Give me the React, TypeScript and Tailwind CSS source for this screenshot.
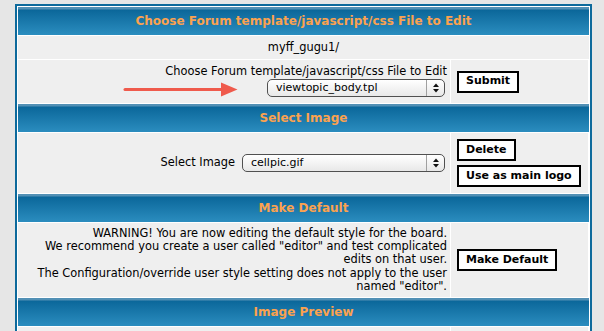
import React from "react";

const Head = ({ title }: { title: string }) => (
  <div className="flex h-[28px] items-center justify-center bg-[linear-gradient(to_bottom,#5290b5_0px,#5290b5_2px,#0b679a_3px,#2b8dbf_100%)] text-[12px] font-bold text-[#fba24f]">
    {title}
  </div>
);

const Btn = ({ label }: { label: string }) => (
  <div className="flex h-[22px] w-fit items-center border-2 border-black bg-white px-[7px] text-[11px] font-bold text-black">
    {label}
  </div>
);

const Sel = ({ value, className }: { value: string; className: string }) => (
  <div
    className={
      "flex h-[18px] items-stretch rounded-[5px] border border-[#505050] bg-[linear-gradient(to_bottom,#ffffff,#e8e8e8)] text-[11px] " +
      className
    }
  >
    <span className="flex-1 pl-[8px] text-left leading-[16px]">{value}</span>
    <span className="flex w-[18px] items-center justify-center border-l border-[#a0a0a0]">
      <svg width="6" height="10" viewBox="0 0 6 10">
        <polygon points="3,0.5 6,4 0,4" fill="#111" />
        <polygon points="0,6 6,6 3,9.5" fill="#111" />
      </svg>
    </span>
  </div>
);

export default function App() {
  return (
    <div className="relative h-[331px] overflow-hidden bg-[#e6e6e6] pt-[4px] font-['DejaVu_Sans',sans-serif] text-[11.4px] text-black">
      <div className="ml-[15px] w-[577px] border-2 border-[#0d6a9c] bg-white p-px">
        <div className="flex flex-col gap-px">
          <Head title="Choose Forum template/javascript/css File to Edit" />

          <div className="flex h-[23px] items-center justify-center bg-[#efefef]">myff_gugu1/</div>

          <div className="grid grid-cols-[432px_137px] gap-px">
            <div className="flex h-[43px] flex-col items-end bg-[#efefef] pr-[3px] pt-[4px]">
              <div className="leading-[14px]">Choose Forum template/javascript/css File to Edit</div>
              <Sel value="viewtopic_body.tpl" className="mr-[2px] mt-px w-[178px]" />
            </div>
            <div className="flex items-center bg-[#efefef] pl-[6px]">
              <Btn label="Submit" />
            </div>
          </div>

          <Head title="Select Image" />

          <div className="grid grid-cols-[432px_137px] gap-px">
            <div className="flex h-[60px] items-center justify-end bg-[#efefef] pr-[5px]">
              <span className="mr-[7px]">Select Image</span>
              <Sel value="cellpic.gif" className="w-[203px]" />
            </div>
            <div className="flex flex-col justify-center gap-[4px] bg-[#efefef] pl-[6px]">
              <Btn label="Delete" />
              <Btn label="Use as main logo" />
            </div>
          </div>

          <Head title="Make Default" />

          <div className="grid grid-cols-[432px_137px] gap-px">
            <div className="flex h-[74px] flex-col items-end justify-center whitespace-nowrap bg-[#efefef] pr-[3px] text-right leading-[13.3px]">
              <div>WARNING! You are now editing the default style for the board.</div>
              <div>We recommend you create a user called "editor" and test complicated</div>
              <div>edits on that user.</div>
              <div>The Configuration/override user style setting does not apply to the user</div>
              <div>named "editor".</div>
            </div>
            <div className="flex items-center bg-[#efefef] pl-[6px]">
              <Btn label="Make Default" />
            </div>
          </div>

          <Head title="Image Preview" />

          <div className="grid grid-cols-[432px_137px] gap-px">
            <div className="h-[20px] bg-[#efefef]" />
            <div className="bg-[#efefef]" />
          </div>
        </div>
      </div>

      <svg className="absolute left-0 top-0" width="604" height="331">
        <line x1="125" y1="89.5" x2="224" y2="89.5" stroke="#ef5a4c" strokeWidth="3" strokeLinecap="round" />
        <polygon points="221,82.5 237.5,89.5 221,96.5" fill="#ef5a4c" />
      </svg>
    </div>
  );
}
